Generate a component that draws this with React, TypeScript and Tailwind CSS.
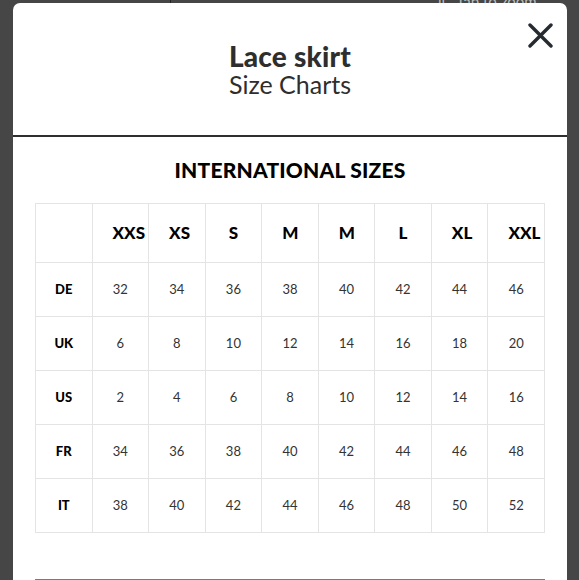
import React from "react";

const SIZES = ["XXS", "XS", "S", "M", "M", "L", "XL", "XXL"];

const ROWS: { label: string; values: number[] }[] = [
  { label: "DE", values: [32, 34, 36, 38, 40, 42, 44, 46] },
  { label: "UK", values: [6, 8, 10, 12, 14, 16, 18, 20] },
  { label: "US", values: [2, 4, 6, 8, 10, 12, 14, 16] },
  { label: "FR", values: [34, 36, 38, 40, 42, 44, 46, 48] },
  { label: "IT", values: [38, 40, 42, 44, 46, 48, 50, 52] },
];

function CloseIcon() {
  return (
    <svg width="25" height="25" viewBox="0 0 25 25" fill="none">
      <path d="M2 2L23 23M23 2L2 23" stroke="#262b31" strokeWidth="3.4" strokeLinecap="round" />
    </svg>
  );
}

export default function App() {
  return (
    <div
      className="relative w-[579px] h-[580px] overflow-hidden bg-[#464646]"
      style={{ fontFamily: "Lato, 'Open Sans', sans-serif" }}
    >
      {/* page content peeking behind the overlay */}
      <div className="absolute top-0 left-[170px] w-px h-[4px] bg-[#222]" />
      <div className="absolute -top-[8px] left-[438px] text-[15px] leading-[18px] text-[#bdbdbd]">ll&nbsp;&nbsp; Tap to zoom</div>

      <div className="relative ml-[13px] mt-[3px] w-[554px] h-[600px] bg-white rounded-t-[7px]">
        {/* header */}
        <div className="relative h-[132px] flex flex-col items-center pt-[39px] text-[#2e2e2e]">
          <h1 className="text-[28px] leading-[28px] font-black tracking-[0.2px]">Lace skirt</h1>
          <p className="text-[25px] leading-[28px] font-normal">Size Charts</p>
          <button type="button" aria-label="Close" className="absolute top-[20px] right-[14px]">
            <CloseIcon />
          </button>
        </div>
        <div className="h-[2px] bg-[#2f2f2f]" />

        {/* chart */}
        <div className="px-[22px]">
          <h2 className="mt-[18px] text-center text-[21px] leading-[30px] font-black text-black tracking-[0.2px]">
            INTERNATIONAL SIZES
          </h2>
          <table className="mt-[18px] w-[510px] table-fixed border-collapse">
            <thead>
              <tr className="h-[59px]">
                <th className="border border-[#e4e4e4]" />
                {SIZES.map((s, i) => (
                  <th
                    key={i}
                    className="border border-[#e4e4e4] px-[20px] text-center text-[17px] font-black text-black whitespace-nowrap"
                  >
                    {s}
                  </th>
                ))}
              </tr>
            </thead>
            <tbody>
              {ROWS.map((r) => (
                <tr key={r.label} className="h-[54px]">
                  <td className="border border-[#e4e4e4] text-center text-[13px] font-black text-black">{r.label}</td>
                  {r.values.map((v, i) => (
                    <td key={i} className="border border-[#e4e4e4] text-center text-[13px] text-[#333]">
                      {v}
                    </td>
                  ))}
                </tr>
              ))}
            </tbody>
          </table>
          <div className="mt-[46px] h-[2px] bg-[#7a7a7a]" />
        </div>
      </div>
    </div>
  );
}
